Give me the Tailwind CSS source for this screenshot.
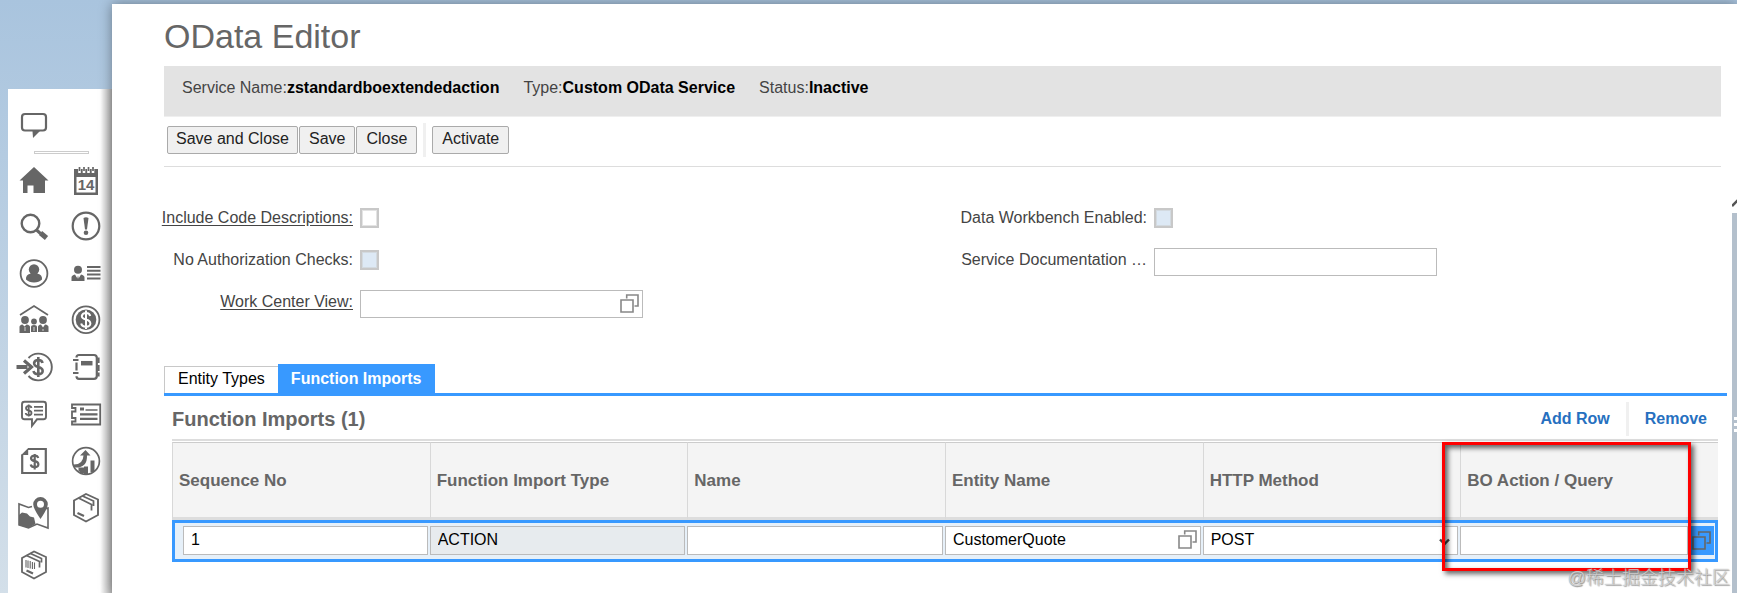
<!DOCTYPE html>
<html lang="en">

<head>
    <meta charset="UTF-8">
    <meta name="viewport" content="width=device-width, initial-scale=1.0">
    <title>OData Editor</title>
    <script src="https://cdn.jsdelivr.net/npm/@tailwindcss/browser@4"></script>
</head>

<body class="relative flex min-h-screen overflow-hidden bg-linear-to-b from-[#a9c4de] to-[#d3dfe9] font-['Liberation_Sans',Arial,sans-serif] text-base/5 text-black">

    <!-- Shared icon -->
    <svg class="hidden">
        <symbol id="lookup" viewBox="0 0 19 19">
            <path d="M6.7 4.5V1h11.3v11h-3.5M1 6h12v12H1z" fill="none" stroke="currentColor" stroke-width="1.6" />
        </symbol>
    </svg>

    <!-- Shortcut bar -->
    <aside class="relative mt-[89px] ml-2 w-[104px] shrink-0 bg-white text-[#666]">
        <nav aria-label="Shortcuts">
            <a href="#" aria-label="Feed" class="block h-[62px]">
                <svg class="h-[62px] w-[52px]" viewBox="0 0 52 62" fill="none">
                    <rect x="14" y="25" width="24" height="16.500" rx="3" stroke="currentColor" stroke-width="2.2" />
                    <path d="M24.500 42h7.500l-7 7z" fill="currentColor" />
                </svg>
            </a>
            <div class="ml-[26px] h-[3px] w-[55px] border border-[#ccc]"></div>
            <div class="mt-[3px] flex">
                <div class="w-[52px]">
                    <a href="#" aria-label="Home" class="block">
                        <svg class="h-[47px] w-[52px]" viewBox="0 0 52 47" fill="currentColor">
                            <path d="M26 10L11.500 23.500H15V36h4.500v-7.500h6V36H37V23.500h3.500z" />
                        </svg>
                    </a>
                    <a href="#" aria-label="Search" class="block">
                        <svg class="h-[47px] w-[52px]" viewBox="0 0 52 47" fill="none" stroke="currentColor">
                            <circle cx="22.500" cy="19.500" r="8.800" stroke-width="2.400" />
                            <path d="M28.500 26l4 3.500" stroke-width="3" />
                            <path d="M32.500 29l6 5" stroke-width="5" />
                        </svg>
                    </a>
                    <a href="#" aria-label="My profile" class="block">
                        <svg class="h-[47px] w-[52px]" viewBox="0 0 52 47" fill="currentColor">
                            <circle cx="26" cy="22.500" r="13.400" fill="none" stroke="currentColor" stroke-width="1.800" />
                            <circle cx="26" cy="18.500" r="5.200" />
                            <path d="M23 22.500h6q5.500 1 5 6Q31 31.500 26 31.500t-8-3Q17.500 23.500 23 22.500z" />
                        </svg>
                    </a>
                    <a href="#" aria-label="Accounts" class="block">
                        <svg class="h-[47px] w-[52px]" viewBox="0 0 52 47" fill="currentColor">
                            <path d="M12 17l14-9 14 9" fill="none" stroke="currentColor" stroke-width="1.700" />
                            <circle cx="17" cy="22" r="3.900" />
                            <circle cx="35" cy="22" r="3.900" />
                            <circle cx="26" cy="23.500" r="2.900" />
                            <path d="M11.500 35v-6q0-2 3-2.500l2 2 2-2q3.500.5 3.500 2.500v6zM30 34v-5q0-2 3-2.500l2 3 2-3q3.500.5 3.500 2.500v5zM23 34v-5q0-2 3-2t3 2v5z" />
                            <path d="M17 29v4M26 29v4M35 31v2" stroke="white" stroke-width=".7" />
                        </svg>
                    </a>
                    <a href="#" aria-label="Leads" class="block">
                        <svg class="h-[47px] w-[52px]" viewBox="0 0 52 47" fill="none" stroke="currentColor">
                            <path d="M20.500 13a13.400 13.400 0 1 1 0 18" stroke-width="1.900" />
                            <path d="M8.500 22h11" stroke-width="4" />
                            <path d="M16 15.500l7.500 6.500-7.500 6.500" stroke-width="3.200" />
                            <path d="M34.500 18q-.5-3-4.200-3t-4.200 3q0 3 4.200 4t4.400 4q-.2 3.200-4.400 3.200t-4.800-3.200M30.300 12v20" stroke-width="2.600" />
                        </svg>
                    </a>
                    <a href="#" aria-label="Quotes" class="block">
                        <svg class="h-[47px] w-[52px]" viewBox="0 0 52 47" fill="none" stroke="currentColor">
                            <path d="M16.500 9.800h19q2.500 0 2.500 2.500v12.500q0 2.500-2.500 2.500H29l-5 6.500v-6.500h-7.500q-2.500 0-2.500-2.500V12.300q0-2.500 2.500-2.500z" stroke-width="1.900" />
                            <path d="M23.500 16q-.5-2-2.800-2t-2.700 2q0 2 2.700 2.500t2.800 2.500q0 2.200-2.800 2.200t-3-2.200M20.700 12.500v12" stroke-width="1.800" />
                            <path d="M26 14.800h9M26 18.700h9M26 22.700h9" stroke-width="1.700" />
                        </svg>
                    </a>
                    <a href="#" aria-label="Orders" class="block">
                        <svg class="h-[47px] w-[52px]" viewBox="0 0 52 47" fill="none" stroke="currentColor">
                            <path d="M20 10h17.800v24H14.200V15.500" stroke-width="2.200" />
                            <path d="M13.200 16l7-7v7z" fill="currentColor" stroke="none" />
                            <path d="M30.200 19q-.5-2.500-3.500-2.500T23 19q0 2.500 3.700 3.200t3.700 3.300q-.2 2.700-3.700 2.700t-4-2.700M26.700 15v15.500" stroke-width="2.200" />
                        </svg>
                    </a>
                    <a href="#" aria-label="Map" class="block">
                        <svg class="h-[47px] w-[52px]" viewBox="0 -2 52 47" fill="currentColor">
                            <path d="M24 18.500l-3.500 1L11 16v21l9.500 3 8.500-4 11 4V20l-3 .8" fill="none" stroke="currentColor" stroke-width="1.600" />
                            <path d="M11 27l3-2.500 5 1 3 3 4 1 1.500 6.500-7 4L11 37z" />
                            <path fill-rule="evenodd" d="M32.500 9a7.300 7.300 0 0 1 7.300 7.300q0 4-7.300 14.700-7.300-10.700-7.300-14.700A7.300 7.300 0 0 1 32.500 9zm0 3.700a3.500 3.500 0 1 0 0 7 3.500 3.500 0 0 0 0-7z" />
                        </svg>
                    </a>
                    <a href="#" aria-label="Registered products" class="block">
                        <svg class="h-[47px] w-[52px]" viewBox="0 0 52 47" fill="none" stroke="currentColor">
                            <path d="M14 25l12-6.500L38 24v15l-12 6.500L14 39z" stroke-width="1.800" />
                            <path d="M18.500 22.500l13 6v6M22.500 20.500l11 5v4" stroke-width="1.700" />
                            <path d="M18 27v7.500M20 27.500V35M22.200 28v7.500M24.400 29v7M26.500 29.500V36" stroke-width="1.100" />
                            <path d="M18.500 37.500l6.500 3" stroke-width="2.200" />
                        </svg>
                    </a>
                </div>
                <div class="w-[52px]">
                    <a href="#" aria-label="Calendar" class="block">
                        <svg class="h-[47px] w-[52px]" viewBox="0 0 52 47" fill="currentColor">
                            <path fill-rule="evenodd" d="M14 12h24v26H14zM16.500 20v15.500h19V20z" />
                            <path d="M19.500 10v6M24 10v6M28.500 10v6M33 10v6" stroke="white" stroke-width="2.600" />
                            <path d="M19.500 10v4M24 10v4M28.500 10v4M33 10v4" stroke="currentColor" stroke-width="1.700" />
                            <text x="26" y="33" text-anchor="middle" class="text-[15px] font-bold">14</text>
                        </svg>
                    </a>
                    <a href="#" aria-label="Alerts" class="block">
                        <svg class="h-[47px] w-[52px]" viewBox="0 0 52 47" fill="currentColor">
                            <circle cx="26" cy="22" r="13.300" fill="none" stroke="currentColor" stroke-width="2.200" />
                            <path d="M23.500 14q2.500-1.500 5 0l-1.500 11.500h-2z" />
                            <circle cx="26" cy="28.700" r="2.300" />
                        </svg>
                    </a>
                    <a href="#" aria-label="Contacts" class="block">
                        <svg class="h-[47px] w-[52px]" viewBox="0 0 52 47" fill="currentColor">
                            <circle cx="18" cy="18.800" r="4" />
                            <path d="M11.500 30v-3.500q0-2 3.500-3l3 5 3-5q3.500 1 3.500 3V30z" />
                            <path d="M18 24.500l1 4-1 1.500-1-1.500z" />
                            <path d="M27 16h13.500M27 19.700h13.500M27 23.500h13.500M27 27.500h13.500" stroke="currentColor" stroke-width="1.900" />
                        </svg>
                    </a>
                    <a href="#" aria-label="Opportunities" class="block">
                        <svg class="h-[47px] w-[52px]" viewBox="0 0 52 47" fill="currentColor">
                            <circle cx="26" cy="21.700" r="13.400" fill="none" stroke="currentColor" stroke-width="1.800" />
                            <circle cx="26" cy="21.700" r="10.300" />
                            <path d="M30.200 18q-.5-3-4.200-3t-4.200 3q0 2.500 4.200 3.500t4.400 4q-.2 3.200-4.400 3.200t-4.800-3.200M26 12.500v18.500" fill="none" stroke="white" stroke-width="2" />
                        </svg>
                    </a>
                    <a href="#" aria-label="Address book" class="block">
                        <svg class="h-[47px] w-[52px]" viewBox="0 0 52 47" fill="none" stroke="currentColor">
                            <path d="M16.500 12.500Q16.500 10 19 10h15q2.800 0 2.800 2.800V31q0 2.800-2.800 2.800H19q-2.500 0-2.500-2.500M16.500 17.500v8" stroke-width="2.200" />
                            <path d="M13 15h5.500M13 28h5.500" stroke-width="1.900" />
                            <path d="M38.500 12.500v5.500M38.500 20v6M38.500 27.500v4" stroke-width="2.200" />
                            <path d="M21 18.200h11.500" stroke-width="4.500" />
                        </svg>
                    </a>
                    <a href="#" aria-label="Tickets" class="block">
                        <svg class="h-[47px] w-[52px]" viewBox="0 0 52 47" fill="none" stroke="currentColor">
                            <path d="M12 12.500h28.200v20H12v-3h3.500v-3.500H12v-6.500h3.500V16H12z" stroke-width="1.800" />
                            <path d="M20 17h4" stroke-width="3" />
                            <path d="M25.500 18h12" stroke-width="1.500" />
                            <path d="M20 22.300h17.500M20 26.800h17.500" stroke-width="2.200" />
                        </svg>
                    </a>
                    <a href="#" aria-label="Forecasts" class="block">
                        <svg class="h-[47px] w-[52px]" viewBox="0 0 52 47" fill="currentColor">
                            <circle cx="26" cy="22" r="13.400" fill="none" stroke="currentColor" stroke-width="1.700" />
                            <path d="M13 25.500q10 .5 10.500-9h-3.500L25.500 11l5 5.500H27q.5 13-13 12z" />
                            <path d="M18.500 30.500h3.500v3.500M26 35v-7.500M32.500 33V21.500" fill="none" stroke="currentColor" stroke-width="4" />
                        </svg>
                    </a>
                    <a href="#" aria-label="Products" class="block">
                        <svg class="h-[47px] w-[52px]" viewBox="0 0 52 47" fill="none" stroke="currentColor">
                            <path d="M14 14.500L26 8l12 5.500V29l-12 6.500L14 29z" stroke-width="1.900" />
                            <path d="M18.500 12l13 6.500v6M22.500 10l11 5v5" stroke-width="1.800" />
                            <path d="M17.500 27l6.500 3" stroke-width="2.200" />
                        </svg>
                    </a>
                </div>
            </div>
        </nav>
        <!-- Shade beside the editor -->
        <div class="pointer-events-none absolute inset-y-0 right-0 w-3 bg-linear-to-r from-transparent to-black/30"></div>
    </aside>

    <!-- Editor -->
    <main class="relative mt-1 flex min-w-0 flex-1 flex-col bg-white pt-3 pl-[52px] shadow-[0_0_12px_rgba(0,0,0,0.4)]">
        <header class="mr-4 border-b border-[#ddd] pb-[9px]">
            <h1 class="text-[34px]/[40px] text-[#666]">OData Editor</h1>
            <div class="mt-[10px] flex h-[51px] gap-6 border-b border-[#efefef] bg-[#e3e3e3] px-[18px] pt-3 text-[#444]">
                <p>Service Name:<b class="text-black">zstandardboextendedaction</b></p>
                <p>Type:<b class="text-black">Custom OData Service</b></p>
                <p>Status:<b class="text-black">Inactive</b></p>
            </div>
            <div class="mt-[6px] ml-[3px] flex h-[34px] items-center gap-px text-[#222]">
                <button class="h-7 rounded-xs border border-[#aaa] bg-[#f0f0f0] px-2 pb-[2px]">Save and Close</button>
                <button class="h-7 rounded-xs border border-[#aaa] bg-[#f0f0f0] px-[9px] pb-[2px]">Save</button>
                <button class="h-7 rounded-xs border border-[#aaa] bg-[#f0f0f0] px-[9px] pb-[2px]">Close</button>
                <div class="mx-[5px] h-[34px] w-[3px] bg-[#f0f0f0]"></div>
                <button class="h-7 rounded-xs border border-[#aaa] bg-[#f0f0f0] px-[9px] pb-[2px]">Activate</button>
            </div>
        </header>

        <div class="mt-8 flex flex-1">
            <div class="min-w-0 flex-1">
                <!-- Service settings -->
                <form class="-ml-1 grid grid-cols-2 pt-[7px] text-[#444]">
                    <div>
                        <div class="flex h-[42px] gap-[7px]">
                            <label for="codes" class="w-[193px] pt-[2px] text-right whitespace-nowrap underline underline-offset-2">Include Code Descriptions:</label>
                            <input id="codes" type="checkbox" class="mt-[2px] h-5 w-[19px] appearance-none border-2 border-[#c8c8c8] bg-white inset-ring inset-ring-[#e4e4e4]">
                        </div>
                        <div class="flex h-[42px] gap-[7px]">
                            <label for="noauth" class="w-[193px] pt-[2px] text-right whitespace-nowrap">No Authorization Checks:</label>
                            <input id="noauth" type="checkbox" disabled class="mt-[2px] h-5 w-[19px] appearance-none border-2 border-[#c8c8c8] bg-[#dde9f5] inset-ring inset-ring-[#d3dae0]">
                        </div>
                        <div class="flex h-[42px] gap-[7px]">
                            <label for="wcv" class="w-[193px] pt-[2px] text-right whitespace-nowrap underline underline-offset-2">Work Center View:</label>
                            <div class="relative h-7 w-[283px]">
                                <input id="wcv" type="text" class="h-7 w-full border border-[#bbb] bg-white px-2 text-black">
                                <button type="button" aria-label="Select work center view" class="absolute top-1 right-1 text-[#888]"><svg class="size-[19px]"><use href="#lookup" /></svg></button>
                            </div>
                        </div>
                    </div>
                    <div class="pl-2">
                        <div class="flex h-[42px] gap-[7px]">
                            <label for="workbench" class="w-[193px] pt-[2px] text-right whitespace-nowrap">Data Workbench Enabled:</label>
                            <input id="workbench" type="checkbox" disabled class="mt-[2px] h-5 w-[19px] appearance-none border-2 border-[#c8c8c8] bg-[#dde9f5] inset-ring inset-ring-[#d3dae0]">
                        </div>
                        <div class="flex h-[42px] gap-[7px]">
                            <label for="docs" class="w-[193px] pt-[2px] text-right whitespace-nowrap">Service Documentation …</label>
                            <input id="docs" type="text" class="h-7 w-[283px] border border-[#bbb] bg-white px-2 text-black">
                        </div>
                    </div>
                </form>

                <!-- Tabs -->
                <div class="mt-8 mr-[5px] flex items-end border-b-3 border-[#3899ff]">
                    <button class="h-[27px] border border-r-0 border-b-0 border-[#c8c8c8] px-[13px] pb-[2px]">Entity Types</button>
                    <button class="h-[29px] bg-[#3899ff] px-[13px] font-bold text-white">Function Imports</button>
                </div>

                <section class="mr-[14px] ml-2">
                    <div class="flex h-[43px] items-center justify-between">
                        <h2 class="pt-[3px] text-xl/5 font-bold text-[#666]">Function Imports (1)</h2>
                        <div class="mt-[3px] flex h-[34px] items-center font-bold text-[#2670c0]">
                            <button class="mr-4 pb-px">Add Row</button>
                            <div class="h-[34px] w-[3px] bg-[#f0f0f0]"></div>
                            <button class="mr-[11px] ml-4 pb-px">Remove</button>
                        </div>
                    </div>
                    <div class="relative border-t-2 border-[#ddd] pt-px">
                        <table class="w-full table-fixed border-separate border-spacing-0">
                            <thead>
                                <tr class="h-[78px] bg-[#f4f4f4] text-left text-[17px]/5 text-[#666]">
                                    <th class="border-t border-b-3 border-l border-t-[#ccc] border-b-[#ddd] border-l-[#d8d8d8] pt-[2px] pl-[6px]">Sequence No</th>
                                    <th class="border-t border-b-3 border-l border-t-[#ccc] border-b-[#ddd] border-l-[#d8d8d8] pt-[2px] pl-[6px]">Function Import Type</th>
                                    <th class="border-t border-b-3 border-l border-t-[#ccc] border-b-[#ddd] border-l-[#d8d8d8] pt-[2px] pl-[6px]">Name</th>
                                    <th class="border-t border-b-3 border-l border-t-[#ccc] border-b-[#ddd] border-l-[#d8d8d8] pt-[2px] pl-[6px]">Entity Name</th>
                                    <th class="border-t border-b-3 border-l border-t-[#ccc] border-b-[#ddd] border-l-[#d8d8d8] pt-[2px] pl-[6px]">HTTP Method</th>
                                    <th class="border-t border-b-3 border-l border-t-[#ccc] border-b-[#ddd] border-l-[#d8d8d8] pt-[2px] pl-[6px]">BO Action / Query</th>
                                </tr>
                            </thead>
                            <tbody>
                                <tr class="h-[42px] bg-[#e6f0f9]">
                                    <td class="border-y-3 border-l-3 border-[#3899ff] pt-[3px] pr-[2px] pb-1 pl-2">
                                        <input type="text" aria-label="Sequence No" value="1" class="block h-[29px] w-full border border-[#bbb] bg-white px-[7px] pb-[2px]">
                                    </td>
                                    <td class="border-y-3 border-[#3899ff] pt-[3px] pr-[2px] pb-1">
                                        <input type="text" aria-label="Function Import Type" value="ACTION" readonly class="block h-[29px] w-full border border-[#bbb] bg-[#e7ebee] px-[7px] pb-[2px]">
                                    </td>
                                    <td class="border-y-3 border-[#3899ff] pt-[3px] pr-[2px] pb-1">
                                        <input type="text" aria-label="Name" class="block h-[29px] w-full border border-[#bbb] bg-white px-[7px] pb-[2px]">
                                    </td>
                                    <td class="border-y-3 border-[#3899ff] pt-[3px] pr-[2px] pb-1">
                                        <div class="relative">
                                            <input type="text" aria-label="Entity Name" value="CustomerQuote" class="block h-[29px] w-full border border-[#bbb] bg-white px-[7px] pb-[2px]">
                                            <button type="button" aria-label="Select entity" class="absolute top-1 right-1 text-[#888]"><svg class="size-[19px]"><use href="#lookup" /></svg></button>
                                        </div>
                                    </td>
                                    <td class="border-y-3 border-[#3899ff] pt-[3px] pr-[2px] pb-1">
                                        <div class="relative">
                                            <select aria-label="HTTP Method" class="block h-[29px] w-full appearance-none border border-[#bbb] bg-white px-[7px] pb-[2px]">
                                                <option>POST</option>
                                            </select>
                                            <svg class="pointer-events-none absolute top-3 right-2 h-2 w-[11px] text-[#444]" viewBox="0 0 11 8" fill="none" stroke="currentColor" stroke-width="2.4"><path d="M1 1.500l4.500 4.500L10 1.500" /></svg>
                                        </div>
                                    </td>
                                    <td class="border-y-3 border-r-3 border-[#3899ff] pt-[3px] pr-px pb-1">
                                        <div class="flex">
                                            <input type="text" aria-label="BO Action / Query" class="block h-[29px] w-full min-w-0 border border-[#bbb] bg-white px-[7px] pb-[2px]">
                                            <button type="button" aria-label="Select action or query" class="h-[29px] w-[26px] shrink-0 bg-[#3899ff] px-1 text-[#666]"><svg class="size-[19px]"><use href="#lookup" /></svg></button>
                                        </div>
                                    </td>
                                </tr>
                            </tbody>
                        </table>
                        <!-- Highlight frame -->
                        <div class="pointer-events-none absolute top-px right-[27px] h-[129px] w-[249px] border-3 border-[#fe0000] shadow-[3px_3px_5px_rgba(0,0,0,0.6),inset_3px_3px_5px_rgba(0,0,0,0.6)]"></div>
                    </div>
                </section>
            </div>

            <!-- Scroll bar -->
            <div class="flex w-[5px] flex-col overflow-hidden">
                <svg class="h-[14px] w-[5px]" viewBox="0 0 5 14" fill="none" stroke="#555" stroke-width="2.5"><path d="M0 7l6-6" /></svg>
                <div class="flex flex-1 flex-col items-end gap-[3px] bg-[#b4c0cc] pt-[204px]">
                    <div class="h-[3px] w-[3px] bg-white"></div>
                    <div class="h-[3px] w-[3px] bg-white"></div>
                    <div class="h-[3px] w-[3px] bg-white"></div>
                </div>
            </div>
        </div>
    </main>

    <p class="absolute right-[7px] bottom-[5px] font-['Liberation_Sans','Noto_Sans_CJK_SC',sans-serif] text-lg/5 font-light text-white/60 [text-shadow:0_0_1px_#777,1px_1px_1px_#999]">@稀土掘金技术社区</p>
</body>

</html>
